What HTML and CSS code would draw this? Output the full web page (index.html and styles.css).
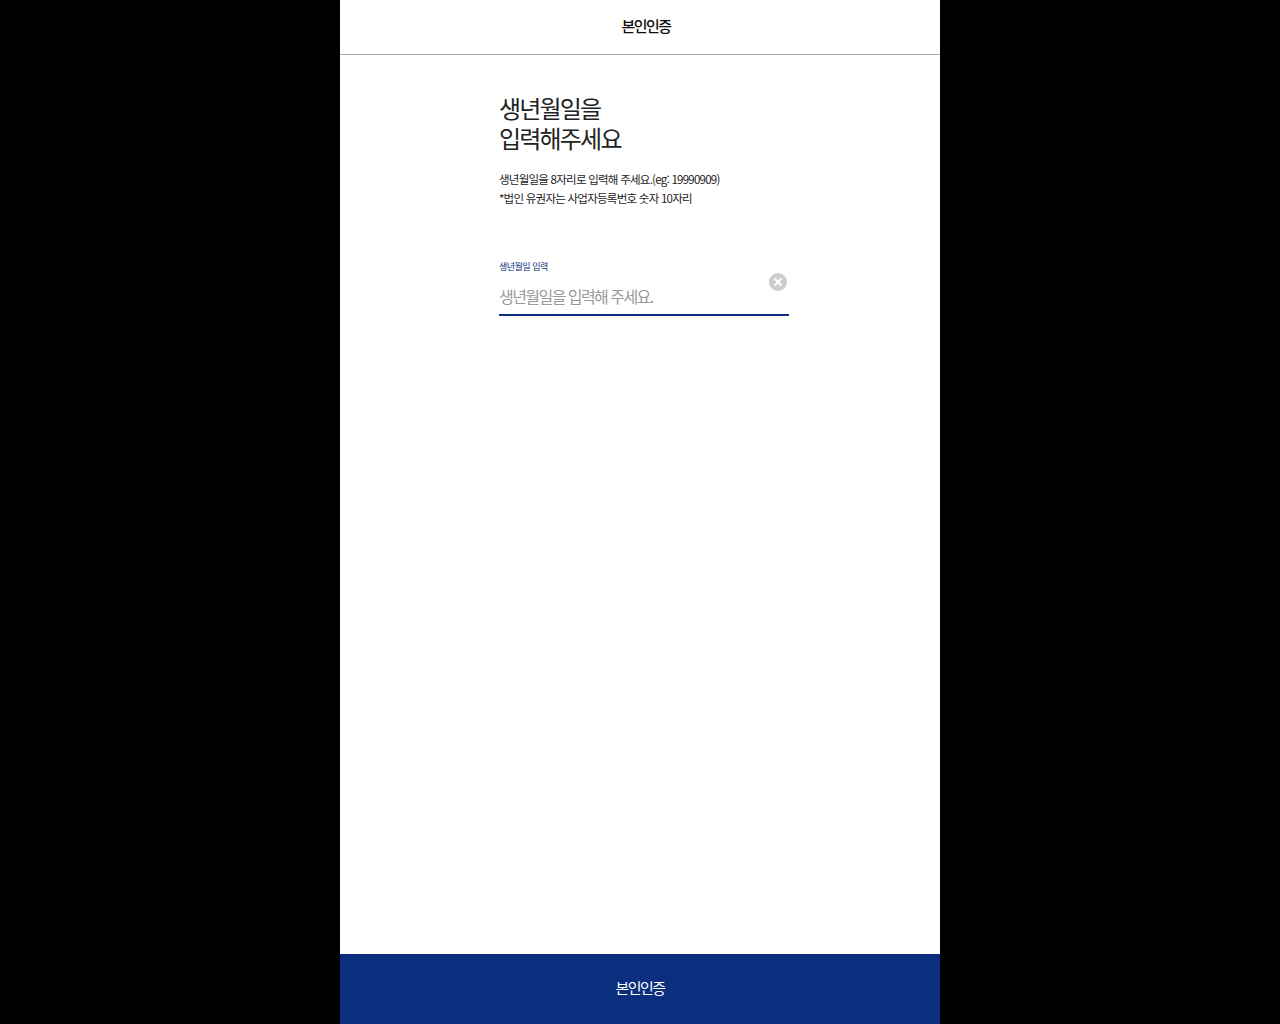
FILE: index.html
```html
<!DOCTYPE html>
<html lang="ko">
<head>
  <meta charset="UTF-8" />
  <meta name="viewport" content="width=device-width, initial-scale=1.0"/>
  <title>본인인증</title>
  <link rel="stylesheet" href="styles.css">
</head>
<body>
  <div class="app">
    <header class="top-bar">
      <h1>본인인증</h1>
    </header>

    <main class="content">
      <h2>생년월일을<br>입력해주세요</h2>
      <p class="desc">생년월일을 8자리로 입력해 주세요.(eg: 19990909)<br>*법인 유권자는 사업자등록번호 숫자 10자리</p>

      <div class="field">
        <label for="birth">생년월일 입력</label>
        <div class="input-row">
          <input id="birth" type="text" placeholder="생년월일을 입력해 주세요.">
          <button class="clear-btn" type="button" aria-label="지우기">
            <svg width="18" height="18" viewBox="0 0 18 18">
              <circle cx="9" cy="9" r="9" fill="#ccc"/>
              <path d="M5.5 5.5l7 7M12.5 5.5l-7 7" stroke="#fff" stroke-width="2" fill="none"/>
            </svg>
          </button>
        </div>
      </div>
    </main>

    <button class="submit-btn" type="button">본인인증</button>
  </div>
</body>
</html>
```

FILE: styles.css
```css
* {
  box-sizing: border-box;
}

html, body {
  height: 100%;
}

body {
  margin: 0;
  background: #000;
  color: #222;
  font-family: "Noto Sans CJK KR", "Noto Sans", sans-serif;
}

.app {
  width: 600px;
  height: 100%;
  margin: 0 auto;
  background: #fff;
  display: flex;
  flex-direction: column;
}

.top-bar {
  height: 55px;
  flex: none;
  border-bottom: 1px solid #aaa;
  display: flex;
  align-items: center;
  justify-content: center;
  padding: 0 0 4px 12px;
}

.top-bar h1 {
  margin: 0;
  font-size: 15px;
  font-weight: 500;
  letter-spacing: -1.5px;
  color: #111;
}

.content {
  flex: 1;
  width: 290px;
  margin-left: 159px;
  padding-top: 38px;
}

h2 {
  margin: 0;
  font-size: 24px;
  line-height: 30px;
  font-weight: 400;
  letter-spacing: -1.8px;
  color: #222;
}

.desc {
  margin: 17px 0 0;
  font-size: 11.5px;
  line-height: 19px;
  letter-spacing: -0.75px;
  color: #222;
}

.field {
  margin-top: 52px;
}

.field label {
  display: block;
  font-size: 9px;
  line-height: 14px;
  letter-spacing: -0.5px;
  color: #0b2f7e;
}

.input-row {
  position: relative;
  border-bottom: 2px solid #0b2f7e;
  height: 42px;
}

.input-row input {
  width: 100%;
  height: 100%;
  padding: 3px 30px 0 0;
  border: none;
  outline: none;
  background: none;
  font-family: inherit;
  font-size: 16px;
  letter-spacing: -1.55px;
  color: #222;
}

.input-row input::placeholder {
  color: #999;
  opacity: 1;
}

.clear-btn {
  position: absolute;
  right: 2px;
  top: -1px;
  width: 18px;
  height: 18px;
  padding: 0;
  border: none;
  background: none;
  line-height: 0;
  cursor: pointer;
}

.submit-btn {
  flex: none;
  height: 70px;
  padding: 0 0 4px;
  border: none;
  background: #0b2f7e;
  color: #fff;
  font-family: inherit;
  font-size: 15px;
  letter-spacing: -1.5px;
  cursor: pointer;
}
```
